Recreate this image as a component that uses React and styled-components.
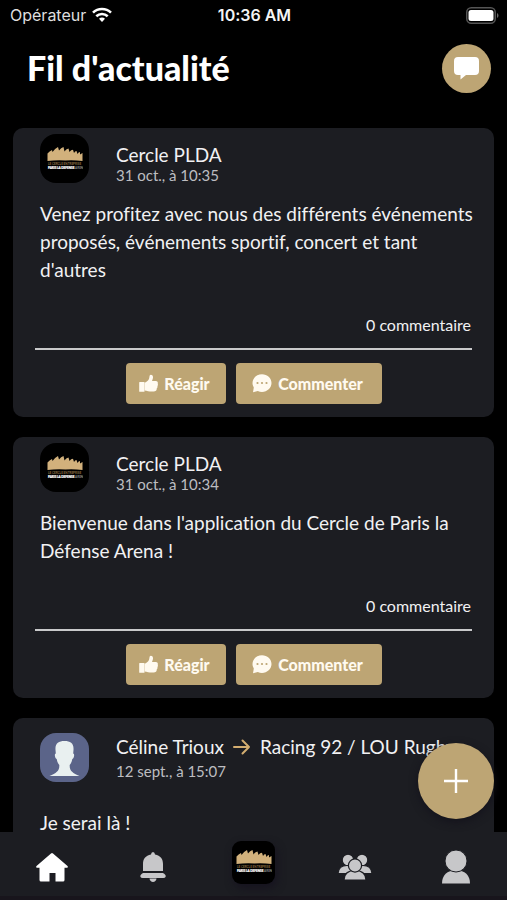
import React from "react";
import styled, { createGlobalStyle, css } from "styled-components";

const gold = "#bda574";
const panel = "#1c1d22";
const lato = `Lato, "Liberation Sans", sans-serif`;

const GlobalStyle = createGlobalStyle`
  *, *::before, *::after { box-sizing: border-box; }
  body {
    margin: 0;
    background: #000;
    color: #f1f1f3;
    font-family: ${lato};
    font-variant-ligatures: none;
    text-rendering: optimizeLegibility;
  }
  button { font-family: inherit; border: 0; padding: 0; cursor: pointer; text-rendering: inherit; }
  h1, h2, p { margin: 0; font-weight: 400; }
  svg { display: block; flex: none; }
`;

const Screen = styled.div`
  height: 100vh;
  display: flex;
  flex-direction: column;
  overflow: hidden;
`;

const StatusBar = styled.div`
  flex: none;
  height: 30px;
  padding: 0 8px 0 10px;
  display: grid;
  grid-template-columns: 1fr auto 1fr;
  align-items: center;
  font-family: Inter, "Liberation Sans", sans-serif;
  font-size: 16px;
  color: #dedede;
`;

const Carrier = styled.span`
  display: flex;
  align-items: center;
  gap: 6px;
`;

const Clock = styled.time`
  font-weight: 600;
  color: #f4f4f4;
`;

const BatteryArea = styled.span`
  justify-self: end;
`;

const Header = styled.header`
  flex: none;
  height: 76px;
  padding: 0 16px 0 27px;
  display: flex;
  align-items: center;
  justify-content: space-between;
`;

const Title = styled.h1`
  && { font-weight: 900; }
  font-size: 34px;
  line-height: 40px;
  color: #fff;
`;

const RoundButton = styled.button`
  display: grid;
  place-items: center;
  border-radius: 50%;
  background: ${gold};
  color: #fff;
  width: ${(p) => p.$size}px;
  height: ${(p) => p.$size}px;
`;

const Feed = styled.main`
  flex: 1;
  min-height: 0;
  overflow-y: auto;
  scrollbar-width: none;
  padding: 22px 13px 0;
  display: flex;
  flex-direction: column;
  gap: 20px;
`;

const Card = styled.article`
  flex: none;
  background: ${panel};
  border-radius: 10px;
  padding: ${(p) => (p.$roomy ? 15 : 6)}px 0 13px;
`;

const PostHead = styled.div`
  display: flex;
  gap: 27px;
  padding: 0 22px 0 27px;
`;

const Avatar = styled.div`
  flex: none;
  width: 49px;
  height: 49px;
  border-radius: 16px;
  overflow: hidden;
  display: grid;
  place-items: center;
  background: ${(p) => (p.$person ? "#5b6489" : "#000")};
`;

const Meta = styled.div`
  min-width: 0;
  padding-top: ${(p) => (p.$roomy ? 2 : 9)}px;
`;

const NameLine = styled.h2`
  display: flex;
  align-items: center;
  gap: 9px;
  white-space: nowrap;
  font-size: 19px;
  line-height: 24px;
`;

const PostDate = styled.time`
  display: block;
  font-size: 15px;
  line-height: ${(p) => (p.$roomy ? 24 : 16)}px;
  color: #bdbdc1;
`;

const Message = styled.p`
  padding: 0 16px 0 27px;
  margin-top: ${(p) => (p.$roomy ? 26 : 17)}px;
  font-size: 19px;
  line-height: 28px;
`;

const CommentCount = styled.p`
  margin-top: 29px;
  padding-right: 23px;
  text-align: right;
  font-size: 16px;
  line-height: 24px;
`;

const Divider = styled.hr`
  height: 2px;
  border: 0;
  margin: 11px 22px 13px;
  background: #c9c9cb;
`;

const Actions = styled.div`
  display: flex;
  justify-content: center;
  gap: 10px;
`;

const ActionButton = styled.button`
  height: 41px;
  width: ${(p) => (p.$wide ? 146 : 100)}px;
  display: flex;
  align-items: center;
  justify-content: center;
  gap: 6px;
  padding-right: 2px;
  border-radius: 4px;
  background: ${gold};
  color: #fffaf0;
  font-size: 16px;
  line-height: 20px;
  font-weight: 900;
`;

const TabBar = styled.nav`
  position: relative;
  flex: none;
  height: 68px;
  padding: 0 0 0 1px;
  display: grid;
  grid-template-columns: repeat(5, 1fr);
  background: ${panel};
  border-bottom: 4px solid #18151c;
`;

const Tab = styled.button`
  display: grid;
  place-items: center;
  padding-top: 6px;
  background: none;
  color: ${(p) => (p.$active ? "#fff" : "#c7c7c9")};
  ${(p) => p.$center && css`padding: 0 0 4px;`}
`;

const LogoTile = styled.span`
  width: 43px;
  height: 43px;
  border-radius: 9px;
  display: grid;
  place-items: center;
  background: #000;
  box-shadow: 2px 4px 8px #16131f;
`;

const FloatingAdd = styled(RoundButton)`
  position: absolute;
  right: 13px;
  bottom: 77px;
  box-shadow: 0 3px 8px #14131c;
`;

const WifiIcon = () => (
  <svg width="20" height="16" viewBox="0 0 20 16" fill="none" stroke="#fff" strokeWidth="2.6" aria-hidden="true">
    <path d="M1 5.6C6 .8 14 .8 19 5.6" />
    <path d="M4.3 9.2c3.2-3 8.2-3 11.4 0" />
    <path d="M7 11.8c1.7-1.6 4.3-1.6 6 0L10 15z" fill="#fff" stroke="none" />
  </svg>
);

const BatteryIcon = () => (
  <svg width="33" height="17" viewBox="0 0 33 17" aria-hidden="true">
    <rect x=".75" y=".75" width="28.5" height="15.5" rx="4.5" fill="none" stroke="#555" strokeWidth="1.5" />
    <rect x="2.5" y="3" width="25" height="11" rx="2.5" fill="#fff" />
    <path d="M31 6c2 1 2 4 0 5z" fill="#666" />
  </svg>
);

const ChatIcon = () => (
  <svg width="25" height="24" viewBox="0 0 25 24" fill="currentColor" aria-hidden="true">
    <path d="M4 1h17q4 0 4 4v10q0 4-4 4h-9l-5.5 4.5V19H4q-4 0-4-4V5q0-4 4-4z" />
  </svg>
);

const ThumbIcon = () => (
  <svg width="19" height="19" viewBox="0 0 19 19" fill="currentColor" aria-hidden="true">
    <path d="M.8 8h4.1q.6 0 .6.6v8.6q0 .6-.6.6H.8q-.6 0-.6-.6V8.6Q.2 8 .8 8z" />
    <path d="M5.6 8.7c1.6-.5 3-1.8 3.8-2.7 1-1.1.8-2.6 1.3-4.4.5-1.6 3.2-1 3.3 1.4.1 1.5-.7 2.8-1 4h3.9c1.4 0 2.4 1.4 1.8 2.7.4.8.3 1.8-.3 2.4.3.9 0 1.8-.7 2.3.2 2-.9 3.2-3.1 3.2h-2c-2.3 0-4.8-.5-7-1z" />
  </svg>
);

const BubbleIcon = () => (
  <svg width="20" height="19" viewBox="0 0 20 19" aria-hidden="true">
    <path d="M10 .3c5.3 0 9.5 3.8 9.5 8.8s-4.2 8.8-9.5 8.8c-1.5 0-2.9-.3-4.2-.9L1 18.2l.8-4.8C1 12.2.5 10.7.5 9.1.5 4.1 4.7.3 10 .3z" fill="currentColor" />
    <g fill={gold}>
      <circle cx="5.5" cy="9" r="1.1" /><circle cx="10" cy="9" r="1.1" /><circle cx="14.5" cy="9" r="1.1" />
    </g>
  </svg>
);

const ArrowIcon = () => (
  <svg width="18" height="18" viewBox="0 0 18 18" fill="none" stroke="#d3ad70" strokeWidth="2" strokeLinecap="round" strokeLinejoin="round" aria-hidden="true">
    <path d="M1 9h15M9.5 2.5 16 9l-6.5 6.5" />
  </svg>
);

const PlusIcon = () => (
  <svg width="24" height="24" viewBox="0 0 24 24" stroke="#fff" strokeWidth="2.4" aria-hidden="true">
    <path d="M12 0v24M0 12h24" />
  </svg>
);

const ArenaLogo = () => (
  <svg width="36" height="26" viewBox="0 0 36 26" role="img" aria-label="Cercle Paris La Défense Arena">
    <path
      fill="#d2b17c"
      d="M.5 15V7.500Q2.500 5 5 4L5.500 6Q8 2.500 11 1L12 4.500Q14 1.500 16.500 1L17.500 5.500Q19 3 21.500 2.500L22.500 6Q24 3.800 26 3.800L27 7Q28 5 29.500 5L30.500 8Q31.500 6 33 6V8.500L35.500 7V15Q27 14 18.500 14.500 9 14 .5 15z"
    />
    <text x="1" y="18.500" fontFamily="Lato, sans-serif" fontSize="3" fontWeight="700" fill="#8d6f43">LE CERCLE ENTREPRISE</text>
    <text x="1" y="22.500" fontFamily="Lato, sans-serif" fontSize="3" fontWeight="900" fill="#fff" stroke="#fff" strokeWidth=".2">PARIS LA DEFENSE <tspan fill="#888" stroke="none">AREN</tspan></text>
  </svg>
);

const PersonPortrait = () => (
  <svg width="49" height="49" viewBox="0 0 49 49" fill="#e9f0f0" role="img" aria-label="Céline Trioux">
    <path d="M24.5 8c6 0 9.500 2.500 9 9l-.3 3.500c1.600.1 1.100 4.500-.9 5.500-.4 3-1.600 4.600-2.600 6-.3 6 3 8 9.800 11H9.500c6.800-3 10.100-5 9.800-11-1-1.400-2.200-3-2.600-6-2-1-2.500-5.400-.9-5.500l-.3-3.500C15 10.500 18.500 8 24.500 8z" />
  </svg>
);

const HomeIcon = () => (
  <svg width="34" height="31" viewBox="0 0 34 31" fill="currentColor" aria-hidden="true">
    <path d="M16 1.4q1-.9 2 0L32.5 14q1 1-.2 1.800H29.500V28q0 1.500-1.500 1.500h-7.500V21h-6v8.500H6q-1.500 0-1.500-1.500V15.800H1.700Q.5 15 1.500 14z" />
  </svg>
);

const BellIcon = () => (
  <svg width="28" height="32" viewBox="0 0 28 32" fill="currentColor" aria-hidden="true">
    <path d="M14 1q1.800 0 2 2.500C21.500 4.500 24 8 24 13v7H4v-7c0-5 2.500-8.500 8-9.500Q12.200 1 14 1z" />
    <path d="M4 22h20q3.500 2 2.500 4-.5 1-2 1h-21q-1.500 0-2-1-1-2 2.500-4z" />
    <path d="M10.500 27.500h7c-.3 4.500-6.700 4.500-7 0z" />
  </svg>
);

const GroupIcon = () => (
  <svg width="34" height="26" viewBox="0 0 34 26" fill="currentColor" stroke={panel} strokeWidth="1.2" aria-hidden="true">
    <circle cx="10" cy="6" r="5.8" /><circle cx="24" cy="6" r="5.8" />
    <path d="M0 19.500c.5-6 4-8 9-8s7 3 7 8zM34 19.500c-.5-6-4-8-9-8s-7 3-7 8z" />
    <path d="M6 26c0-6 4-9.500 11-9.500S28 20 28 26z" />
    <circle cx="17" cy="11.500" r="6.600" />
  </svg>
);

const UserIcon = () => (
  <svg width="30" height="34" viewBox="0 0 30 34" fill="currentColor" aria-hidden="true">
    <path d="M1 33.500C1 25 6 20.500 15 20.500S29 25 29 33.500z" />
    <circle cx="15" cy="11" r="11" stroke={panel} strokeWidth="1" />
  </svg>
);

const posts = [
  {
    name: "Cercle PLDA",
    date: "31 oct., à 10:35",
    text: "Venez profitez avec nous des différents événements proposés, événements sportif, concert et tant d'autres",
  },
  {
    name: "Cercle PLDA",
    date: "31 oct., à 10:34",
    text: "Bienvenue dans l'application du Cercle de Paris la Défense Arena !",
  },
  {
    name: "Céline Trioux",
    target: "Racing 92 / LOU Rugby",
    date: "12 sept., à 15:07",
    text: "Je serai là !",
  },
];

function Post({ name, target, date, text }) {
  const roomy = Boolean(target);
  return (
    <Card $roomy={roomy}>
      <PostHead>
        <Avatar $person={roomy}>{roomy ? <PersonPortrait /> : <ArenaLogo />}</Avatar>
        <Meta $roomy={roomy}>
          <NameLine>
            <span>{name}</span>
            {target && <ArrowIcon />}
            {target && <span>{target}</span>}
          </NameLine>
          <PostDate $roomy={roomy}>{date}</PostDate>
        </Meta>
      </PostHead>
      <Message $roomy={roomy}>{text}</Message>
      <CommentCount>0 commentaire</CommentCount>
      <Divider />
      <Actions>
        <ActionButton type="button"><ThumbIcon />Réagir</ActionButton>
        <ActionButton type="button" $wide><BubbleIcon />Commenter</ActionButton>
      </Actions>
    </Card>
  );
}

export default function App() {
  return (
    <Screen>
      <GlobalStyle />
      <StatusBar>
        <Carrier>Opérateur <WifiIcon /></Carrier>
        <Clock>10:36 AM</Clock>
        <BatteryArea><BatteryIcon /></BatteryArea>
      </StatusBar>
      <Header>
        <Title>Fil d'actualité</Title>
        <RoundButton type="button" $size={49} aria-label="Messages"><ChatIcon /></RoundButton>
      </Header>
      <Feed>
        {posts.map((post) => <Post key={post.date} {...post} />)}
      </Feed>
      <TabBar>
        <Tab type="button" $active aria-label="Accueil"><HomeIcon /></Tab>
        <Tab type="button" aria-label="Notifications"><BellIcon /></Tab>
        <Tab type="button" $center aria-label="Cercle"><LogoTile><ArenaLogo /></LogoTile></Tab>
        <Tab type="button" aria-label="Groupes"><GroupIcon /></Tab>
        <Tab type="button" aria-label="Profil"><UserIcon /></Tab>
        <FloatingAdd type="button" $size={76} aria-label="Nouvelle publication"><PlusIcon /></FloatingAdd>
      </TabBar>
    </Screen>
  );
}
